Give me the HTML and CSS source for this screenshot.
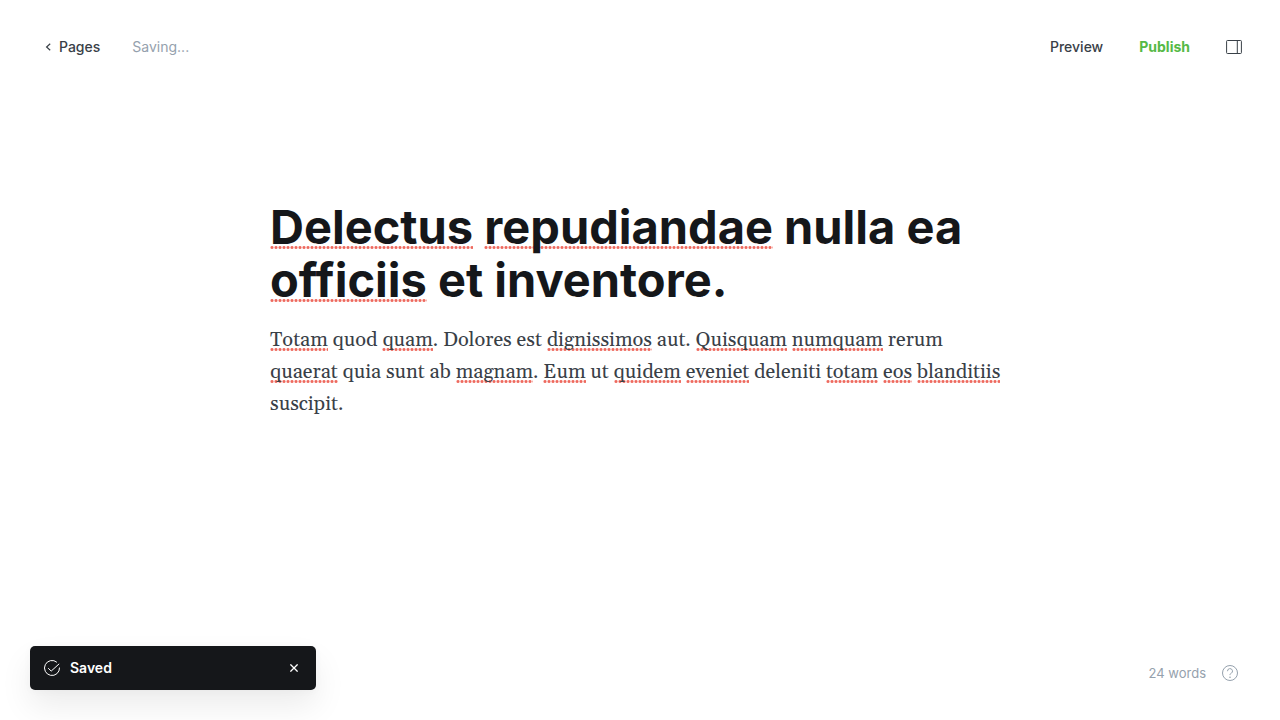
FILE: index.html
```html
<!DOCTYPE html>
<html lang="en">
<head>
<meta charset="utf-8">
<meta name="viewport" content="width=device-width, initial-scale=1">
<title>Page editor</title>
<link rel="stylesheet" href="styles.css">
</head>
<body>
<header class="toolbar">
  <div class="toolbar-group">
    <a class="back" href="#pages">
      <svg class="back-icon" viewBox="0 0 6 8" aria-hidden="true"><path d="M5.2.8 1.6 4l3.6 3.2"/></svg>
      <span>Pages</span>
    </a>
    <span class="status" role="status">Saving...</span>
  </div>
  <div class="toolbar-group">
    <button class="action" type="button">Preview</button>
    <button class="action action-publish" type="button">Publish</button>
    <button class="icon-button" type="button" aria-label="Settings">
      <svg class="panel-icon" viewBox="0 0 16 16" aria-hidden="true"><rect x=".6" y="1.5" width="14.8" height="13" rx=".8"/><path d="M11.3 1.5v13"/></svg>
    </button>
  </div>
</header>
<main class="editor">
  <h1 class="title" contenteditable="true" spellcheck="false" role="textbox" aria-label="Page title"><span class="misspelt">Delectus</span> <span class="misspelt">repudiandae</span> nulla ea <span class="misspelt">officiis</span> et inventore.</h1>
  <div class="content" contenteditable="true" spellcheck="false" role="textbox" aria-label="Page content" aria-multiline="true">
    <p class="paragraph"><span class="misspelt">Totam</span> quod <span class="misspelt">quam</span>. Dolores est <span class="misspelt">dignissimos</span> aut. <span class="misspelt">Quisquam</span> <span class="misspelt">numquam</span> rerum <span class="misspelt">quaerat</span> quia sunt ab <span class="misspelt">magnam</span>. <span class="misspelt">Eum</span> ut <span class="misspelt">quidem</span> <span class="misspelt">eveniet</span> deleniti <span class="misspelt">totam</span> <span class="misspelt">eos</span> <span class="misspelt">blanditiis</span> suscipit.</p>
  </div>
</main>
<footer class="footer">
  <div class="toast" role="alert">
    <svg class="toast-icon" viewBox="0 0 16 16" aria-hidden="true"><path d="M12.9 2.3A7.5 7.5 0 1 0 15.5 7.6M4.2 8.2l3 2.9 8-7.3"/></svg>
    <span class="toast-text">Saved</span>
    <button class="toast-close" type="button" aria-label="Close">
      <svg class="close-icon" viewBox="0 0 8 8" aria-hidden="true"><path d="M.4.4l7.2 7.2M7.6.4L.4 7.6"/></svg>
    </button>
  </div>
  <div class="meta">
    <span class="count">24 words</span>
    <a class="help" href="#help" aria-label="Help">
      <svg class="help-icon" viewBox="0 0 16 16" aria-hidden="true"><circle cx="8" cy="8" r="7.5"/><path d="M5.5 6.2a2.5 2.5 0 1 1 3.7 2.1C8.3 8.8 8 9.2 8 10.1"/><circle class="dot" cx="8" cy="12.2" r=".8"/></svg>
    </a>
  </div>
</footer>
</body>
</html>
```
FILE: styles.css
```css
* {
  box-sizing: border-box;
}

body {
  display: flex;
  flex-direction: column;
  min-height: 100vh;
  margin: 0;
  background: #fff;
  color: #394047;
  font-family: Inter, "Liberation Sans", sans-serif;
  font-size: 14px;
}

button {
  padding: 0;
  border: 0;
  background: none;
  color: inherit;
  font: inherit;
  cursor: pointer;
}

a {
  color: inherit;
  text-decoration: none;
}

svg {
  display: block;
  fill: none;
  stroke: currentColor;
}

.toolbar {
  display: flex;
  align-items: center;
  justify-content: space-between;
  padding: 30px 38px 0 45px;
  line-height: 34px;
}

.toolbar-group {
  display: flex;
  align-items: center;
  gap: 36px;
}

.toolbar-group:first-child {
  gap: 32px;
}

.back {
  display: flex;
  align-items: center;
  gap: 8px;
  font-weight: 500;
}

.back-icon {
  width: 6px;
  height: 8px;
  stroke-width: 1.2;
}

.status {
  color: #95a1ad;
}

.action {
  font-weight: 500;
}

.action-publish {
  color: #55b946;
  font-weight: 700;
}

.panel-icon {
  width: 16px;
  height: 16px;
}

.editor {
  flex: 1;
  width: 100%;
  max-width: 804px;
  margin: 0 auto;
  padding: 136px 32px 64px;
}

.title {
  margin: 0 0 18px;
  outline: 0;
  color: #15171a;
  font-size: 47px;
  font-weight: 700;
  line-height: 53px;
}

.content {
  outline: 0;
  font-family: Georgia, Gelasio, "Liberation Serif", serif;
  font-size: 20px;
  line-height: 32px;
}

.paragraph {
  margin: 0;
}

.misspelt {
  background-image: radial-gradient(circle, #ee6a5f 1px, transparent 2px);
  background-position: left bottom 2px;
  background-repeat: repeat-x;
  background-size: 4px 3px;
}

.title .misspelt {
  background-position: left bottom 6px;
}

.footer {
  display: flex;
  align-items: center;
  justify-content: space-between;
  padding: 0 42px 30px 30px;
}

.toast {
  display: flex;
  align-items: center;
  gap: 10px;
  width: 286px;
  padding: 12px 18px 12px 14px;
  border-radius: 5px;
  background: #15171a;
  box-shadow: 0 1px 8px rgba(0, 0, 0, 0.03), 0 16px 32px rgba(0, 0, 0, 0.08);
  color: #fff;
  line-height: 20px;
}

.toast-icon {
  width: 16px;
  height: 16px;
}

.toast-text {
  flex: 1;
  font-weight: 600;
}

.close-icon {
  width: 8px;
  height: 8px;
  stroke-width: 1.3;
}

.meta {
  display: flex;
  align-items: center;
  gap: 16px;
  padding-top: 10px;
  color: #95a1ad;
  font-size: 13px;
}

.help-icon {
  width: 16px;
  height: 16px;
}

.dot {
  fill: currentColor;
  stroke: none;
}
```
